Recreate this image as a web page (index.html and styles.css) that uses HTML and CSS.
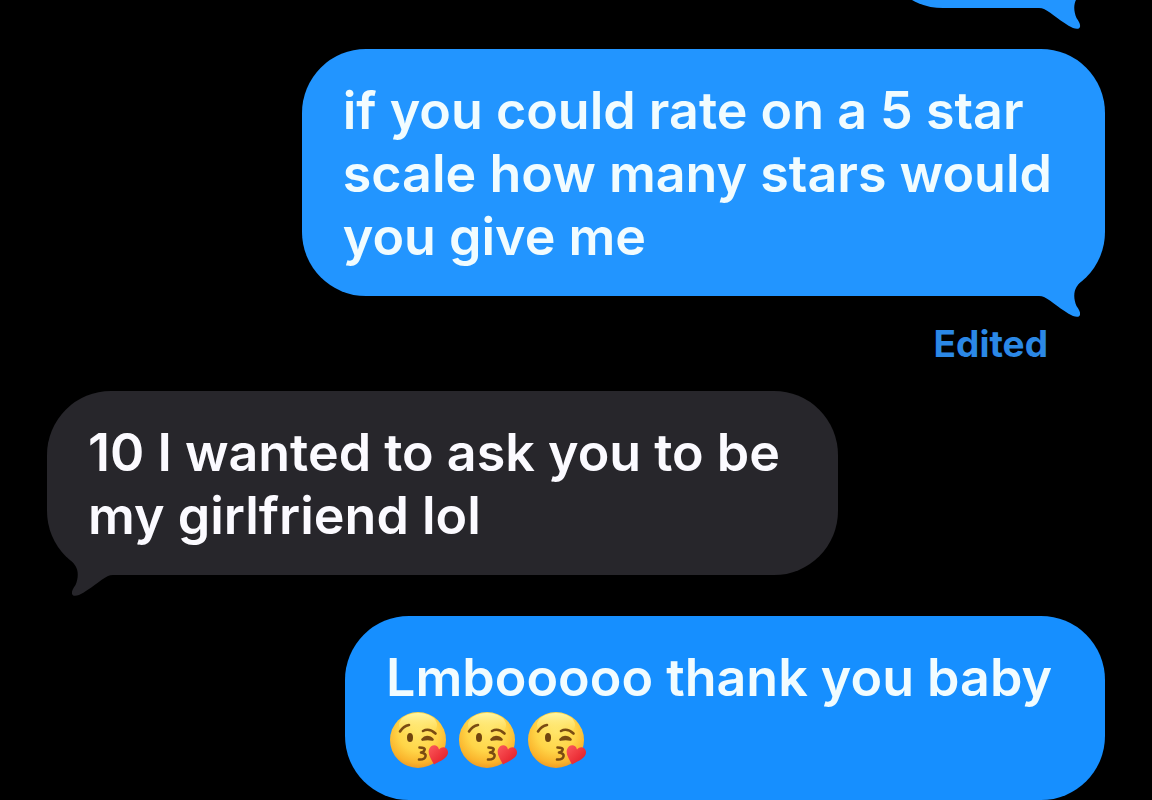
FILE: index.html
```html
<!DOCTYPE html>
<html lang="en">
  <head>
    <meta charset="UTF-8" />
    <meta name="viewport" content="width=device-width, initial-scale=1.0" />
    <title>Messages</title>

    <link rel="stylesheet" href="styles.css" />
  </head>
  <body>
    <!-- shared shapes -->
    <svg class="shapes" aria-hidden="true">
      <defs>
        <symbol id="tail" viewBox="0 0 50 44">
          <path d="M0 0H48C44 5 40 9 37.500 13C34.500 18 34.500 25 37.500 32C40 35.500 41.500 38 41 41C40 43.500 37 43 34 42C22 36 13 27 5 23Q3 22 0 22V10Z" />
        </symbol>
        <radialGradient id="face" cx="0.5" cy="0.35" r="0.7">
          <stop offset="0" stop-color="#ffe568" />
          <stop offset="0.5" stop-color="#ffd548" />
          <stop offset="0.8" stop-color="#fab42c" />
          <stop offset="1" stop-color="#e98f20" />
        </radialGradient>
        <linearGradient id="shine" x1="0" y1="0" x2="0" y2="1">
          <stop offset="0" stop-color="#fffbb0" stop-opacity="0.9" />
          <stop offset="1" stop-color="#ffe568" stop-opacity="0" />
        </linearGradient>
        <linearGradient id="heart" x1="0" y1="0" x2="1" y2="1">
          <stop offset="0" stop-color="#fb5a5c" />
          <stop offset="0.6" stop-color="#ec3038" />
          <stop offset="1" stop-color="#cf1d2a" />
        </linearGradient>
        <symbol id="kiss" viewBox="0 0 60 60">
          <circle cx="30" cy="30" r="28" fill="url(#face)" />
          <ellipse cx="30" cy="15" rx="19" ry="12" fill="url(#shine)" />
          <g fill="none" stroke="#7a4b12" stroke-width="2.6" stroke-linecap="round" stroke-linejoin="round">
            <path d="M12 21.500Q15.500 16 21 15" />
            <path d="M35 21Q41 17.500 47.500 23.500" />
            <path d="M34.500 29.500Q36.500 27 39 27Q42.500 27 44.500 29.500Q40 28.500 34.500 29.500" />
            <path d="M31.500 37.500Q37.500 37.500 36.500 40Q36 42 33 42.500Q38.500 43.500 37.500 46.500Q36.500 50 31 49.500" />
          </g>
          <ellipse cx="22" cy="27.500" rx="3" ry="4.500" fill="#70440e" />
          <path d="M46 54.500C43 49 39.500 44 41 39.500C42.500 34.500 49.500 33.500 51 39.500C54.500 35 60.500 37.500 60 43C59.500 48.500 51 51.500 46 54.500Z" fill="url(#heart)" />
        </symbol>
      </defs>
    </svg>

    <main class="thread">
      <div class="message sent first">
        <div class="bubble">
          <svg class="tail"><use href="#tail" /></svg>
        </div>
      </div>

      <div class="message sent older">
        <p class="bubble">
          if you could rate on a 5 star<br />
          scale how many stars would<br />
          you give me
          <svg class="tail"><use href="#tail" /></svg>
        </p>
        <button type="button" class="edited">Edited</button>
      </div>

      <div class="message received">
        <p class="bubble">
          10 I wanted to ask you to be<br />
          my girlfriend lol
          <svg class="tail"><use href="#tail" /></svg>
        </p>
      </div>

      <div class="message sent">
        <div class="bubble">
          Lmbooooo thank you baby
          <div class="emojis" role="img" aria-label="Three faces blowing a kiss">
            <svg class="emoji"><use href="#kiss" /></svg>
            <svg class="emoji"><use href="#kiss" /></svg>
            <svg class="emoji"><use href="#kiss" /></svg>
          </div>
        </div>
      </div>
    </main>
  </body>
</html>
```
FILE: styles.css
```css
body {
  margin: 0;
  background-color: #000;
  font-family: Inter, "Liberation Sans", sans-serif;
  font-size: 52px;
  font-weight: 600;
  line-height: 63px;
  color: #fbfaff;
}

.shapes {
  position: absolute;
  width: 0;
  height: 0;
}

.thread {
  display: flex;
  flex-direction: column;
  gap: 41px;
  padding: 0 47px;
  overflow: hidden;
}

.message {
  display: flex;
  flex-direction: column;
  align-items: flex-start;
}

.message.sent {
  align-items: flex-end;
  color: #f1fcff;
}

.bubble {
  position: relative;
  box-sizing: border-box;
  margin: 0;
  padding: 30px 58px 28px 41px;
  border-radius: 64px;
  background-color: #27262b;
  fill: #27262b;
}

.sent .bubble {
  padding-right: 53px;
  background-color: #168fff;
  fill: #168fff;
}

.sent.first .bubble,
.sent.older .bubble {
  background-color: #2295ff;
  fill: #2295ff;
}

/* scrolled almost out of view */
.first .bubble {
  width: 226px;
  height: 184px;
  margin-top: -176px;
}

.tail {
  position: absolute;
  right: 16px;
  bottom: -22px;
  width: 50px;
  height: 44px;
}

.received .tail {
  right: auto;
  left: 16px;
  transform: scaleX(-1);
}

.edited {
  margin: 26px 57px -16px 0;
  padding: 0;
  border: 0;
  background: none;
  font: inherit;
  font-size: 37px;
  font-weight: 700;
  line-height: 44px;
  color: #2b88e6;
}

.emojis {
  display: flex;
  align-items: center;
  gap: 9px;
  height: 61px;
  padding-left: 2px;
  margin-bottom: 2px;
}

.emoji {
  width: 60px;
  height: 60px;
}
```
